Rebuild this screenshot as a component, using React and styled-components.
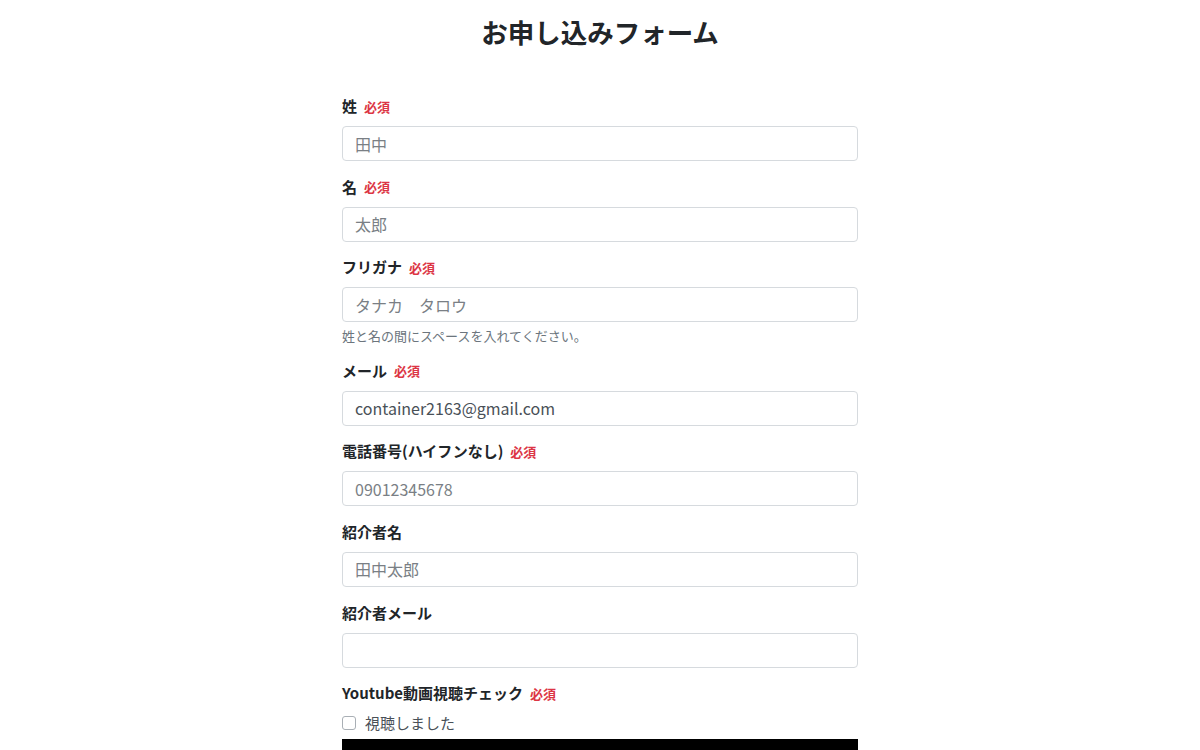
import React from "react";
import styled, { createGlobalStyle } from "styled-components";

const GlobalStyle = createGlobalStyle`
  body {
    margin: 0;
    background: #fff;
    font-family: "Noto Sans CJK JP", "Noto Sans", sans-serif;
    color: #212529;
  }
`;

const Page = styled.div`
  padding-top: 14px;
  display: flex;
  flex-direction: column;
  align-items: center;
`;

const Title = styled.h1`
  margin: 0 0 45px;
  height: 36px;
  font-size: 26.5px;
  line-height: 36px;
  font-weight: 700;
  color: #212529;
`;

const Form = styled.form`
  width: 516px;
  display: flex;
  flex-direction: column;
`;

const Group = styled.div`
  display: flex;
  flex-direction: column;
  margin-bottom: 14.6px;
`;

const Label = styled.label`
  display: flex;
  align-items: center;
  height: 22px;
  font-size: 15px;
  line-height: 22px;
  font-weight: 700;
  margin-bottom: 9px;
`;

const Required = styled.span`
  margin-left: 7px;
  font-size: 13px;
  line-height: 1;
  font-weight: 700;
  color: #dc3545;
`;

const Input = styled.input`
  box-sizing: border-box;
  display: block;
  width: 100%;
  height: 35px;
  margin: 0;
  padding: 0 12px;
  border: 1px solid #d6dade;
  border-radius: 4px;
  font-family: inherit;
  font-size: 16px;
  color: #495057;
  outline: none;

  &::placeholder {
    color: #7a7f85;
  }
`;

const Hint = styled.small`
  display: block;
  height: 19px;
  margin-top: 4px;
  font-size: 13px;
  line-height: 19px;
  color: #6c757d;
`;

const CheckRow = styled.label`
  display: flex;
  align-items: center;
  gap: 9px;
  height: 22px;
  margin-top: -1px;
  font-size: 15px;
  line-height: 22px;
  color: #495057;
`;

const Box = styled.span`
  box-sizing: border-box;
  width: 14px;
  height: 14px;
  border: 1px solid #a9afb5;
  border-radius: 3px;
  background: #fff;
`;

const Video = styled.div`
  margin-top: 5px;
  width: 100%;
  height: 290px;
  background: #000;
`;

const fields = [
  { label: "姓", required: true, placeholder: "田中" },
  { label: "名", required: true, placeholder: "太郎" },
  {
    label: "フリガナ",
    required: true,
    placeholder: "タナカ　タロウ",
    hint: "姓と名の間にスペースを入れてください。",
  },
  { label: "メール", required: true, value: "container2163@gmail.com" },
  { label: "電話番号(ハイフンなし)", required: true, placeholder: "09012345678" },
  { label: "紹介者名", placeholder: "田中太郎" },
  { label: "紹介者メール" },
];

const Field = ({ label, required, placeholder, value, hint }) => (
  <Group>
    <Label>
      {label}
      {required && <Required>必須</Required>}
    </Label>
    <Input placeholder={placeholder} defaultValue={value} />
    {hint && <Hint>{hint}</Hint>}
  </Group>
);

const App = () => (
  <>
    <GlobalStyle />
    <Page>
      <Title>お申し込みフォーム</Title>
      <Form>
        {fields.map((f) => (
          <Field key={f.label} {...f} />
        ))}
        <Group>
          <Label>
            Youtube動画視聴チェック<Required>必須</Required>
          </Label>
          <CheckRow>
            <Box />
            視聴しました
          </CheckRow>
          <Video />
        </Group>
      </Form>
    </Page>
  </>
);

export default App;
